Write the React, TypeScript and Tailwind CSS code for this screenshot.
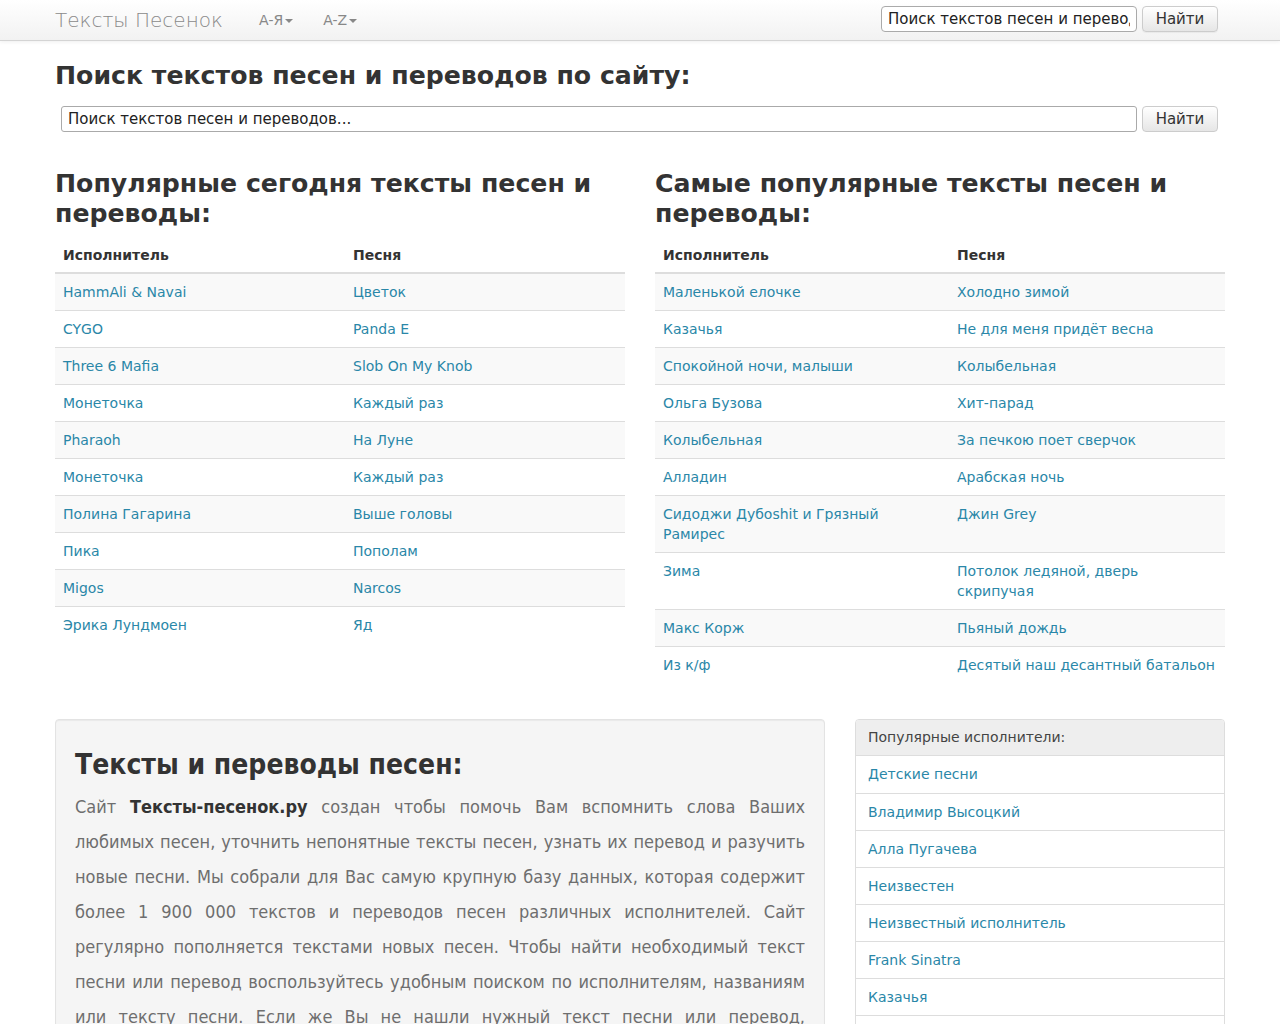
import React from "react";

const FONT = { fontFamily: '"DejaVu Sans", Verdana, sans-serif' };
const COND = { fontFamily: '"DejaVu Sans Condensed", "DejaVu Sans", sans-serif' };

const today: [string, string][] = [
  ["HammAli & Navai", "Цветок"],
  ["CYGO", "Panda E"],
  ["Three 6 Mafia", "Slob On My Knob"],
  ["Монеточка", "Каждый раз"],
  ["Pharaoh", "На Луне"],
  ["Монеточка", "Каждый раз"],
  ["Полина Гагарина", "Выше головы"],
  ["Пика", "Пополам"],
  ["Migos", "Narcos"],
  ["Эрика Лундмоен", "Яд"],
];

const top: [string, string][] = [
  ["Маленькой елочке", "Холодно зимой"],
  ["Казачья", "Не для меня придёт весна"],
  ["Спокойной ночи, малыши", "Колыбельная"],
  ["Ольга Бузова", "Хит-парад"],
  ["Колыбельная", "За печкою поет сверчок"],
  ["Алладин", "Арабская ночь"],
  ["Сидоджи Дубoshit и Грязный Рамирес", "Джин Grey"],
  ["Зима", "Потолок ледяной, дверь скрипучая"],
  ["Макс Корж", "Пьяный дождь"],
  ["Из к/ф", "Десятый наш десантный батальон"],
];

const artists = [
  "Детские песни",
  "Владимир Высоцкий",
  "Алла Пугачева",
  "Неизвестен",
  "Неизвестный исполнитель",
  "Frank Sinatra",
  "Казачья",
  "Сергей Есенин",
  "Виктор Цой",
];

function Caret() {
  return <span className="inline-block ml-[2px] align-middle w-0 h-0 border-l-[4px] border-r-[4px] border-t-[4px] border-l-transparent border-r-transparent border-t-[#888]" />;
}

function SongTable({ rows, firstCol }: { rows: [string, string][]; firstCol: string }) {
  return (
    <table className="w-full border-collapse text-[14px] leading-[20px]">
      <thead>
        <tr>
          <th className={`${firstCol} text-left font-bold text-[#333] px-2 pt-2 pb-[7px] border-b-2 border-[#ddd]`}>Исполнитель</th>
          <th className="text-left font-bold text-[#333] px-2 pt-2 pb-[7px] border-b-2 border-[#ddd]">Песня</th>
        </tr>
      </thead>
      <tbody>
        {rows.map(([a, s], i) => (
          <tr key={i} className={i % 2 === 0 ? "bg-[#f9f9f9]" : "bg-white"}>
            <td className="align-top px-2 py-2 border-t border-[#ddd]">
              <a href="#" className="text-[#2a87a8]">{a}</a>
            </td>
            <td className="align-top px-2 py-2 border-t border-[#ddd]">
              <a href="#" className="text-[#2a87a8]">{s}</a>
            </td>
          </tr>
        ))}
      </tbody>
    </table>
  );
}

export default function App() {
  return (
    <div className="min-h-screen bg-white text-[#333]" style={FONT}>
      {/* Navbar */}
      <div className="h-[41px] bg-gradient-to-b from-white to-[#f2f2f2] border-b border-[#d4d4d4] shadow-[0_1px_4px_rgba(0,0,0,0.065)]">
        <div className="w-[1170px] mx-auto h-[40px] flex items-center">
          <a href="#" className="text-[20px] font-extralight text-[#8a8a8a] mr-[36px]">Тексты Песенок</a>
          <a href="#" className="text-[14px] text-[#888] mr-[30px]">А-Я<Caret /></a>
          <a href="#" className="text-[14px] text-[#888]">A-Z<Caret /></a>
          <div className="ml-auto flex items-center gap-[5px] mr-[7px] -mt-[2px]">
            <input
              className="w-[256px] h-[26px] px-[6px] border border-[#aaa] rounded-[4px] bg-white text-[15px] text-[#222] outline-none"
              style={FONT}
              defaultValue="Поиск текстов песен и переводов..."
            />
            <button className="w-[76px] h-[26px] border border-[#ccc] rounded-[4px] bg-gradient-to-b from-white to-[#e6e6e6] text-[15px] text-[#333] shadow-[0_1px_1px_rgba(0,0,0,0.05)]" style={FONT}>Найти</button>
          </div>
        </div>
      </div>

      <div className="w-[1170px] mx-auto">
        <h2 className="mt-[20px] text-[25.2px] leading-[30px] font-bold text-[#333]">Поиск текстов песен и переводов по сайту:</h2>
        <div className="mt-[15px] flex items-center gap-[5px] ml-[6px] mr-[7px]">
          <input
            className="flex-1 h-[26px] px-[6px] border border-[#aaa] rounded-[3px] bg-white text-[15px] text-[#222] outline-none placeholder:text-[#222]"
            style={FONT}
            placeholder="Поиск текстов песен и переводов..."
          />
          <button className="w-[76px] h-[26px] border border-[#ccc] rounded-[4px] bg-gradient-to-b from-white to-[#e6e6e6] text-[15px] text-[#333]" style={FONT}>Найти</button>
        </div>

        <div className="mt-[37px] grid grid-cols-2 gap-[30px]">
          <div>
            <h3 className="text-[25.2px] leading-[30px] font-bold text-[#333] mb-[8px]">Популярные сегодня тексты песен и переводы:</h3>
            <SongTable rows={today} firstCol="w-[290px]" />
          </div>
          <div>
            <h3 className="text-[25.2px] leading-[30px] font-bold text-[#333] mb-[8px]">Самые популярные тексты песен и переводы:</h3>
            <SongTable rows={top} firstCol="w-[294px]" />
          </div>
        </div>

        <div className="mt-[36px] flex items-start gap-[30px]">
          <div className="w-[770px] bg-[#f5f5f5] border border-[#e3e3e3] rounded-[4px] shadow-[inset_0_1px_1px_rgba(0,0,0,0.05)] px-[19px] pt-[30px] pb-[30px]">
            <h2 className="text-[28px] leading-[30px] font-bold text-[#333]" style={COND}>Тексты и переводы песен:</h2>
            <p className="mt-[9px] text-[18px] leading-[35px] font-extralight text-[#6e6e6e] text-justify" style={COND}>
              Сайт <b className="font-bold text-[#333]">Тексты-песенок.ру</b> создан чтобы помочь Вам вспомнить слова Ваших любимых песен, уточнить непонятные тексты песен, узнать их перевод и разучить новые песни. Мы собрали для Вас самую крупную базу данных, которая содержит более 1 900 000 текстов и переводов песен различных исполнителей. Сайт регулярно пополняется текстами новых песен. Чтобы найти необходимый текст песни или перевод воспользуйтесь удобным поиском по исполнителям, названиям или тексту песни. Если же Вы не нашли нужный текст песни или перевод, воспользуйтесь формой заказа, и мы обязательно добавим его на сайт.
            </p>
          </div>
          <div className="w-[370px] border border-[#ddd] rounded-[4px] overflow-hidden">
            <div className="h-[36px] px-[12px] flex items-center bg-[#eee] border-b border-[#ddd] text-[14px] text-[#444]">Популярные исполнители:</div>
            {artists.map((a, i) => (
              <div key={i} className={`h-[37px] px-[12px] flex items-center bg-white text-[14px] ${i > 0 ? "border-t border-[#ddd]" : ""}`}>
                <a href="#" className="text-[#2a87a8]">{a}</a>
              </div>
            ))}
          </div>
        </div>
        <div className="h-[40px]" />
      </div>
    </div>
  );
}
